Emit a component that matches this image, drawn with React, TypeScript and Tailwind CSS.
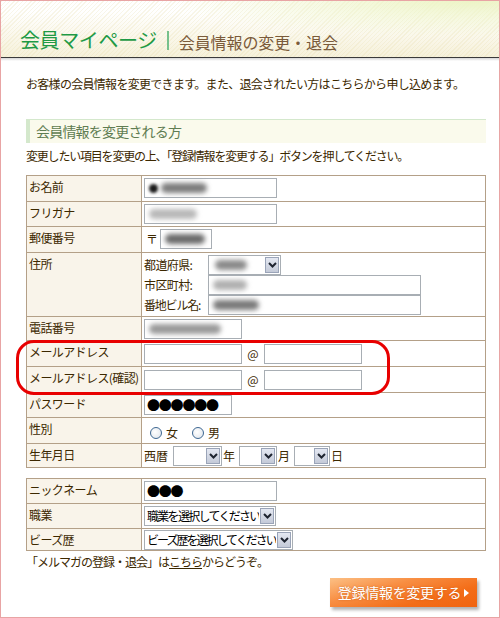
import type { ReactNode } from 'react'

const font = { fontFamily: '"Noto Sans CJK JP", "Noto Sans", sans-serif' }

function Blur({ w, tone = '#8a8a8a', dot }: { w: number; tone?: string; dot?: boolean }) {
  return (
    <span className="flex items-center gap-[3px] pl-[4px]">
      {dot && <span className="h-[9px] w-[9px] rounded-full bg-[#1a1a1a] blur-[1.5px]" />}
      <span className="h-[10px] rounded-full blur-[2.5px]" style={{ width: w, background: tone }} />
    </span>
  )
}

function Field({ w, children }: { w: number; children?: ReactNode }) {
  return (
    <div
      className="flex h-[20px] shrink-0 items-center border border-[#a8aeb4] bg-white"
      style={{ width: w }}
    >
      {children}
    </div>
  )
}

function Chevron() {
  return (
    <svg width="9" height="6" viewBox="0 0 9 6">
      <path d="M1 1 L4.5 4.5 L8 1" fill="none" stroke="#1e2430" strokeWidth="2" />
    </svg>
  )
}

function Select({ w, tight, children }: { w: number; tight?: boolean; children?: ReactNode }) {
  return (
    <div
      className="flex h-[20px] shrink-0 items-stretch border border-[#a8aeb4] bg-white"
      style={{ width: w }}
    >
      <div
        className={`flex flex-1 items-center overflow-hidden whitespace-nowrap pl-[2px] text-[12px] text-black ${
          tight ? 'tracking-[-2px]' : 'tracking-[-1.7px]'
        }`}
      >
        {children}
      </div>
      <div className="m-[1px] flex w-[14px] items-center justify-center border border-[#9aa4b8] bg-[linear-gradient(to_bottom,#e4e8f2,#c4cad8)]">
        <Chevron />
      </div>
    </div>
  )
}

function Radio({ label }: { label: string }) {
  return (
    <span className="flex items-center gap-[4px]">
      <span className="h-[12px] w-[12px] rounded-full border border-[#3d6792] bg-[radial-gradient(circle_at_40%_40%,#ffffff,#dde3ea)]" />
      <span>{label}</span>
    </span>
  )
}

function Row({
  label,
  h,
  last,
  children,
}: {
  label: string
  h: number
  last?: boolean
  children: ReactNode
}) {
  return (
    <div className={`flex ${last ? '' : 'border-b border-[#b4a088]'}`} style={{ height: h }}>
      <div className="w-[115px] shrink-0 border-r border-[#b4a088] bg-[#f9f4ea] pl-[2px] pt-[3px] leading-[16px] tracking-[-0.6px]">
        {label}
      </div>
      <div className="flex-1 bg-white pl-[2px] pt-[2px]">{children}</div>
    </div>
  )
}

export default function App() {
  return (
    <div
      className="h-[618px] w-[500px] overflow-hidden border border-[#e8a4a4] bg-white text-[12px] text-[#3c2800]"
      style={font}
    >
      {/* header */}
      <div className="h-[57px] border-b border-[#3a3a3a] bg-[radial-gradient(ellipse_at_95%_0%,#edf4c6_0%,rgba(237,244,198,0)_45%),repeating-linear-gradient(135deg,rgba(232,222,176,0.28)_0px,rgba(232,222,176,0.28)_1px,transparent_1px,transparent_3px),linear-gradient(to_bottom,#ffffff_20%,#f6f1da)]">
        <div className="flex items-center pl-[19px] pt-[27px]">
          <span className="text-[20px] leading-[22px] tracking-[-0.4px] text-[#1f9a45]">会員マイページ</span>
          <span className="mx-[10px] h-[19px] w-[2px] bg-[#76c18c]" />
          <span className="pt-[4px] text-[16px] leading-[20px] tracking-[-0.1px] text-[#7a5a3a]">
            会員情報の変更・退会
          </span>
        </div>
      </div>
      <div className="h-[3px] bg-[linear-gradient(to_bottom,#d6d6d6,#ffffff)]" />

      <div className="ml-[25px] w-[460px]">
        <p className="mt-[14px] leading-[18px] tracking-[-0.7px]">
          お客様の会員情報を変更できます。また、退会されたい方はこちらから申し込めます。
        </p>

        <div className="mt-[26px] flex h-[24px] items-center border-l-[4px] border-t border-[#d4e8cc] bg-[#fafaec] pl-[6px] text-[14px] tracking-[-0.8px] text-[#5f7d52]">
          会員情報を変更される方
        </div>

        <p className="mt-[4px] leading-[18px] tracking-[-1.2px]">
          変更したい項目を変更の上、「登録情報を変更する」ボタンを押してください。
        </p>

        <div className="relative mt-[10px]">
          <div className="border border-[#b4a088]">
            <Row label="お名前" h={26}>
              <Field w={133}>
                <Blur w={46} tone="#7c7c7c" dot />
              </Field>
            </Row>
            <Row label="フリガナ" h={25}>
              <Field w={133}>
                <Blur w={48} tone="#b8b8b8" />
              </Field>
            </Row>
            <Row label="郵便番号" h={26}>
              <div className="flex items-center gap-[2px] pl-[2px]">
                <span>〒</span>
                <Field w={52}>
                  <Blur w={40} tone="#6a6a6a" />
                </Field>
              </div>
            </Row>
            <Row label="住所" h={64}>
              <div className="flex flex-col">
                <div className="flex h-[19px] items-center">
                  <span className="w-[64px] tracking-[-0.6px]">都道府県:</span>
                  <Select w={73}>
                    <Blur w={32} tone="#8a8a8a" />
                  </Select>
                </div>
                <div className="flex h-[21px] items-center">
                  <span className="w-[64px] tracking-[-0.6px]">市区町村:</span>
                  <Field w={213}>
                    <Blur w={34} tone="#b0b0b0" />
                  </Field>
                </div>
                <div className="flex h-[19px] items-center">
                  <span className="w-[64px] tracking-[-1.2px]">番地ビル名:</span>
                  <Field w={213}>
                    <Blur w={46} tone="#7a7a7a" />
                  </Field>
                </div>
              </div>
            </Row>
            <Row label="電話番号" h={24}>
              <Field w={98}>
                <Blur w={72} tone="#999" />
              </Field>
            </Row>
            <Row label="メールアドレス" h={26}>
              <div className="flex items-center gap-[4px] pt-[1px]">
                <Field w={98} />
                <span className="w-[14px] text-center text-[12px]">@</span>
                <Field w={98} />
              </div>
            </Row>
            <Row label="メールアドレス(確認)" h={26}>
              <div className="flex items-center gap-[4px] pt-[1px]">
                <Field w={98} />
                <span className="w-[14px] text-center text-[12px]">@</span>
                <Field w={98} />
              </div>
            </Row>
            <Row label="パスワード" h={25}>
              <Field w={88}>
                <span className="pl-[2px] text-[13px] leading-[14px] tracking-[-1.2px] text-black">●●●●●●</span>
              </Field>
            </Row>
            <Row label="性別" h={26}>
              <div className="flex h-[22px] items-center gap-[14px] pl-[6px] pt-[4px]">
                <Radio label="女" />
                <Radio label="男" />
              </div>
            </Row>
            <Row label="生年月日" h={23} last>
              <div className="flex items-center">
                <span className="mr-[5px]">西暦</span>
                <Select w={49} />
                <span className="ml-[1px] mr-[4px]">年</span>
                <Select w={38} />
                <span className="ml-[1px] mr-[4px]">月</span>
                <Select w={36} />
                <span className="ml-[1px]">日</span>
              </div>
            </Row>
          </div>
          {/* highlight ring around the e-mail rows */}
          <div className="pointer-events-none absolute left-[-10px] top-[165px] h-[55px] w-[374px] rounded-[18px] border-[3px] border-[#e80000]" />
        </div>

        <div className="mt-[10px] border border-[#b4a088]">
          <Row label="ニックネーム" h={25}>
            <Field w={133}>
              <span className="pl-[2px] text-[13px] leading-[14px] tracking-[-1.2px] text-black">●●●</span>
            </Field>
          </Row>
          <Row label="職業" h={25}>
            <Select w={132}>職業を選択してください</Select>
          </Row>
          <Row label="ビーズ歴" h={21} last>
            <div className="-mt-[1px]">
              <Select w={149} tight>
                ビーズ歴を選択してください
              </Select>
            </div>
          </Row>
        </div>

        <p className="mt-[2px] leading-[18px] tracking-[-1px]">
          「メルマガの登録・退会」は<span className="underline">こちら</span>からどうぞ。
        </p>

        <div className="mt-[7px] flex justify-end pr-[9px]">
          <button
            type="button"
            className="flex h-[29px] w-[147px] items-center justify-center gap-[3px] bg-[linear-gradient(165deg,#fcc085_0%,#f88e42_35%,#f36d18_70%,#f06410_100%)] text-[14px] tracking-[-0.3px] text-white shadow-[2px_3px_3px_rgba(0,0,0,0.3)] [text-shadow:0_0_2px_rgba(180,70,0,0.6)]"
          >
            登録情報を変更する
            <svg width="5" height="8" viewBox="0 0 5 8">
              <path d="M0 0 L5 4 L0 8 Z" fill="#fff" />
            </svg>
          </button>
        </div>
      </div>
    </div>
  )
}
